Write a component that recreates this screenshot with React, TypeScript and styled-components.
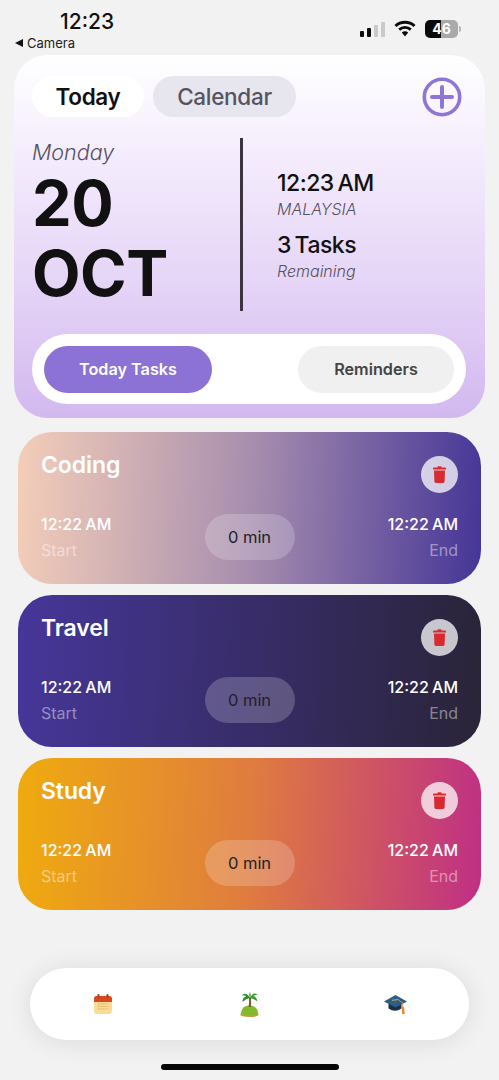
import React from 'react'
import styled, { createGlobalStyle } from 'styled-components'

const GlobalStyle = createGlobalStyle`
    html, body {
        margin: 0;
        padding: 0;
        background: #f2f2f3;
        font-family: "Inter", "Liberation Sans", sans-serif;
        -webkit-font-smoothing: antialiased;
    }
    * {
        box-sizing: border-box;
    }
`
const Page = styled.div`
    width: 499px;
    height: 1080px;
    overflow: hidden;
    display: flex;
    flex-direction: column;
    background: #f2f2f3;
`
const StatusBar = styled.div`
    height: 55px;
    display: flex;
    justify-content: space-between;
    align-items: flex-start;
    flex-shrink: 0;
`
const StatusLeft = styled.div`
    padding: 9px 0 0 15px;
    display: flex;
    flex-direction: column;
`
const Clock = styled.div`
    margin-left: 45px;
    font-size: 21px;
    line-height: 25px;
    font-weight: 500;
    color: #111;
`
const BackLink = styled.div`
    display: flex;
    align-items: center;
    gap: 4px;
    font-size: 13px;
    line-height: 16px;
    margin-top: 1px;
    color: #222;
`
const BackArrow = styled.span`
    width: 0;
    height: 0;
    border-top: 4px solid transparent;
    border-bottom: 4px solid transparent;
    border-right: 8px solid #111;
`
const StatusRight = styled.div`
    margin-top: 20px;
    padding-right: 37px;
    height: 18px;
    display: flex;
    align-items: flex-end;
    gap: 9px;
`
const Signal = styled.div`
    display: flex;
    align-items: flex-end;
    gap: 3px;
    margin-bottom: 1px;
`
const SignalBar = styled.span<{ $h: number; $on?: boolean }>`
    width: 4px;
    height: ${p => p.$h}px;
    border-radius: 1px;
    background: ${p => (p.$on ? '#0c0c0c' : '#c9c9c9')};
`
const Battery = styled.div`
    width: 33px;
    height: 18px;
    border-radius: 5px;
    background: linear-gradient(90deg, #0a0a0a 0 48%, #a9a9a9 48% 100%);
    color: #fff;
    font-size: 14px;
    font-weight: 700;
    line-height: 18px;
    text-align: center;
    position: relative;
    margin-right: 4px;

    &::after {
        content: '';
        position: absolute;
        right: -3px;
        top: 6px;
        width: 2px;
        height: 6px;
        border-radius: 0 2px 2px 0;
        background: #b5b5b5;
    }
`
const Hero = styled.section`
    margin: 0 14px;
    height: 363px;
    flex-shrink: 0;
    border-radius: 34px;
    padding: 21px 19px 14px 18px;
    background: linear-gradient(180deg, #ffffff 0%, #f4ecfd 28%, #e4d3f6 65%, #d2b8ef 100%);
`
const HeroTop = styled.div`
    display: flex;
    align-items: center;
    gap: 9px;
    height: 41px;
    padding-right: 4px;
`
const TabPill = styled.div<{ $active?: boolean; $w: number }>`
    width: ${p => p.$w}px;
    height: 41px;
    border-radius: 21px;
    display: flex;
    align-items: center;
    justify-content: center;
    font-size: 22.5px;
    font-weight: ${p => (p.$active ? 600 : 500)};
    letter-spacing: -0.3px;
    color: ${p => (p.$active ? '#111' : '#55545e')};
    background: ${p => (p.$active ? '#fff' : '#e7e5ed')};
`
const AddButton = styled.div`
    margin-left: auto;
    width: 40px;
    height: 40px;
`
const Info = styled.div`
    margin-top: 21px;
    height: 173px;
    display: flex;
`
const DateCol = styled.div`
    width: 208px;
    flex-shrink: 0;
`
const DayName = styled.div`
    font-size: 21.5px;
    line-height: 28px;
    font-style: italic;
    font-weight: 300;
    color: #55505f;
`
const BigDate = styled.div`
    margin-top: 2px;
    font-size: 63px;
    line-height: 70px;
    font-weight: 700;
    letter-spacing: -0.5px;
    color: #111;
`
const Divider = styled.div`
    width: 3px;
    background: #3c3540;
    flex-shrink: 0;
`
const MetaCol = styled.div`
    padding: 32px 0 0 34px;
`
const MetaValue = styled.div<{ $gap?: boolean }>`
    font-size: 23px;
    line-height: 26px;
    font-weight: 500;
    letter-spacing: -0.5px;
    word-spacing: -2px;
    color: #111;
    margin-top: ${p => (p.$gap ? 10 : 0)}px;
`
const MetaLabel = styled.div`
    font-size: 16px;
    line-height: 26px;
    font-style: italic;
    font-weight: 300;
    color: #55505f;
`
const Segment = styled.div`
    margin-top: 23px;
    width: 434px;
    height: 70px;
    padding: 12px;
    border-radius: 35px;
    background: #fff;
    display: flex;
    justify-content: space-between;
`
const SegmentButton = styled.div<{ $active?: boolean; $w: number }>`
    width: ${p => p.$w}px;
    height: 47px;
    padding-bottom: 1px;
    border-radius: 24px;
    display: flex;
    align-items: center;
    justify-content: center;
    font-size: 16.2px;
    font-weight: 600;
    color: ${p => (p.$active ? '#fff' : '#444')};
    background: ${p => (p.$active ? '#8c72d4' : '#f0f0f0')};
`
const CardList = styled.div`
    margin: 14px 18px 0;
    display: flex;
    flex-direction: column;
    gap: 11.5px;
`
const TaskCard = styled.article<{ $from: string; $to: string; $mid?: string }>`
    height: 151.5px;
    border-radius: 34px;
    padding: 23px 23px 23px;
    background: linear-gradient(93deg, ${p => p.$from}, ${p => (p.$mid ? p.$mid + ',' : '')} ${p => p.$to});
    color: #fff;
`
const CardHead = styled.div`
    height: 38px;
    display: flex;
    justify-content: space-between;
    align-items: flex-start;
`
const CardTitle = styled.div`
    font-size: 23px;
    line-height: 20px;
    font-weight: 600;
    letter-spacing: -0.1px;
`
const DeleteButton = styled.div`
    margin-top: 1px;
    width: 37px;
    height: 37px;
    border-radius: 50%;
    background: rgba(255, 255, 255, 0.74);
    display: flex;
    align-items: center;
    justify-content: center;
`
const CardFoot = styled.div`
    margin-top: 21px;
    height: 46px;
    display: grid;
    grid-template-columns: 1fr 90px 1fr;
`
const TimeStack = styled.div<{ $end?: boolean }>`
    display: flex;
    flex-direction: column;
    gap: 6px;
    text-align: ${p => (p.$end ? 'right' : 'left')};
`
const TimeValue = styled.div`
    font-size: 16px;
    line-height: 20px;
    font-weight: 500;
    word-spacing: -1px;
`
const TimeLabel = styled.div`
    font-size: 16px;
    line-height: 20px;
    color: rgba(255, 255, 255, 0.45);
`
const Duration = styled.div`
    border-radius: 23px;
    background: rgba(255, 255, 255, 0.2);
    display: flex;
    align-items: center;
    justify-content: center;
    font-size: 16.5px;
    color: #221f2b;
`
const BottomNav = styled.nav`
    margin: 58.5px 30px 0;
    height: 72px;
    flex-shrink: 0;
    border-radius: 36px;
    background: #fff;
    box-shadow: 0 2px 26px rgba(0, 0, 0, 0.1);
    display: grid;
    grid-template-columns: repeat(3, 1fr);
    align-items: center;
    justify-items: center;
`
const HomeBar = styled.div`
    margin: 24px auto 0;
    width: 178px;
    height: 6px;
    border-radius: 3px;
    background: #060606;
    flex-shrink: 0;
`

const WifiIcon = () => (
    <svg width="22" height="17" viewBox="0 0 22 17" style={{ marginBottom: 1 }}>
        <path d="M1.5 6 A14 14 0 0 1 20.5 6" fill="none" stroke="#0c0c0c" strokeWidth="3" />
        <path d="M5.2 9.6 A8.6 8.6 0 0 1 16.8 9.6" fill="none" stroke="#0c0c0c" strokeWidth="2.8" />
        <path d="M7.8 12.5 A4.6 4.6 0 0 1 14.2 12.5 L11 16.5 Z" fill="#0c0c0c" />
    </svg>
)

const PlusIcon = () => (
    <svg width="40" height="40" viewBox="0 0 40 40">
        <circle cx="20" cy="20" r="17.7" fill="none" stroke="#8f75d6" strokeWidth="3.6" />
        <path d="M20 10 V30 M10 20 H30" stroke="#8f75d6" strokeWidth="4" strokeLinecap="round" />
    </svg>
)

const TrashIcon = () => (
    <svg width="13" height="17" viewBox="0 0 13 17">
        <path d="M4.5 1 Q4.5 .2 5.3 .2 H7.7 Q8.5 .2 8.5 1 V1.6 H12 Q13 1.6 13 2.6 V3.6 H0 V2.6 Q0 1.6 1 1.6 H4.5 Z" fill="#d92a2f" />
        <path d="M1 4.6 H12 L11.6 15.6 Q11.5 17 10.2 17 H2.8 Q1.5 17 1.4 15.6 Z" fill="#d92a2f" />
    </svg>
)

const CalendarEmoji = () => (
    <svg width="18" height="20" viewBox="0 0 18 20">
        <rect x="0" y="2" width="18" height="18" rx="3" fill="#fbdc95" />
        <path d="M0 8 V5 Q0 2 3 2 H15 Q18 2 18 5 V8 Z" fill="#d9481f" />
        <rect x="3.5" y="0" width="2" height="4" rx="1" fill="#b8381a" />
        <rect x="12.5" y="0" width="2" height="4" rx="1" fill="#b8381a" />
        <path
            d="M4 10 H14 M4 12.5 H14 M4 15 H14 M5 9.5 V16 M8 9.5 V16 M11 9.5 V16 M14 9.5 V16"
            stroke="#e0a765"
            strokeWidth="0.9"
            strokeDasharray="1 1.5"
        />
    </svg>
)

const IslandEmoji = () => (
    <svg width="19" height="25" viewBox="0 0 19 25">
        <ellipse cx="9.5" cy="22.8" rx="9.4" ry="2.2" fill="#c99a4a" />
        <path d="M.8 22 Q1.5 13.6 9.5 13.6 Q17.5 13.6 18.2 22 Q9.5 24.6 .8 22 Z" fill="#7fbb2a" />
        <path d="M8.6 15 Q9.4 10 9 5.5 L11 5.5 Q11.3 11 10.9 15 Z" fill="#7d5a2c" />
        <path d="M10 6 Q6 -.8 1.5 3.4 Q4.6 3 6.3 4.2 Q2.8 5 2.4 10 Q6 6.4 10 6 Z" fill="#2c8c28" />
        <path d="M10 6 Q13 -1 17.6 2.8 Q14.4 2.8 13 4 Q16.6 4.6 17.4 9.6 Q13.6 6.2 10 6 Z" fill="#38992c" />
        <path d="M10 6 Q8.6 2 10 0 Q11.4 2.4 10 6 Z" fill="#2c8c28" />
    </svg>
)

const GraduationEmoji = () => (
    <svg width="23" height="19" viewBox="0 0 23 19">
        <path d="M4.5 7.5 V13.5 Q11 18 17.5 13.5 V7.5 Z" fill="#173248" />
        <path d="M0 6.5 L11.5 0 L23 6.5 L11.5 12.5 Z" fill="#2b5f85" />
        <path d="M8 5.4 L14.5 4.4" stroke="#b99a5a" strokeWidth="1.2" />
        <path d="M14.5 5 L18.8 8 V13" fill="none" stroke="#e08a2c" strokeWidth="1" />
        <path d="M17.8 12 H20 L20.8 19 H18 Z" fill="#ee8a2a" />
    </svg>
)

const tasks = [
    { title: 'Coding', from: '#f4ceb9', mid: '#a78eae', to: '#453597' },
    { title: 'Travel', from: '#46369a', to: '#2a2438' },
    { title: 'Study', from: '#efab0e', mid: '#df7c3f', to: '#bf2f85' },
]

const App = () => {
    return (
        <Page>
            <GlobalStyle />
            <StatusBar>
                <StatusLeft>
                    <Clock>12:23</Clock>
                    <BackLink>
                        <BackArrow />
                        Camera
                    </BackLink>
                </StatusLeft>
                <StatusRight>
                    <Signal>
                        <SignalBar $h={6} $on />
                        <SignalBar $h={9} $on />
                        <SignalBar $h={12} />
                        <SignalBar $h={15} />
                    </Signal>
                    <WifiIcon />
                    <Battery>46</Battery>
                </StatusRight>
            </StatusBar>

            <Hero>
                <HeroTop>
                    <TabPill $active $w={112}>Today</TabPill>
                    <TabPill $w={143}>Calendar</TabPill>
                    <AddButton>
                        <PlusIcon />
                    </AddButton>
                </HeroTop>
                <Info>
                    <DateCol>
                        <DayName>Monday</DayName>
                        <BigDate>
                            20
                            <br />
                            OCT
                        </BigDate>
                    </DateCol>
                    <Divider />
                    <MetaCol>
                        <MetaValue>12:23 AM</MetaValue>
                        <MetaLabel>MALAYSIA</MetaLabel>
                        <MetaValue $gap>3 Tasks</MetaValue>
                        <MetaLabel>Remaining</MetaLabel>
                    </MetaCol>
                </Info>
                <Segment>
                    <SegmentButton $active $w={168}>Today Tasks</SegmentButton>
                    <SegmentButton $w={156}>Reminders</SegmentButton>
                </Segment>
            </Hero>

            <CardList>
                {tasks.map(task => (
                    <TaskCard key={task.title} $from={task.from} $mid={task.mid} $to={task.to}>
                        <CardHead>
                            <CardTitle>{task.title}</CardTitle>
                            <DeleteButton>
                                <TrashIcon />
                            </DeleteButton>
                        </CardHead>
                        <CardFoot>
                            <TimeStack>
                                <TimeValue>12:22 AM</TimeValue>
                                <TimeLabel>Start</TimeLabel>
                            </TimeStack>
                            <Duration>0 min</Duration>
                            <TimeStack $end>
                                <TimeValue>12:22 AM</TimeValue>
                                <TimeLabel>End</TimeLabel>
                            </TimeStack>
                        </CardFoot>
                    </TaskCard>
                ))}
            </CardList>

            <BottomNav>
                <CalendarEmoji />
                <IslandEmoji />
                <GraduationEmoji />
            </BottomNav>
            <HomeBar />
        </Page>
    )
}

export default App
